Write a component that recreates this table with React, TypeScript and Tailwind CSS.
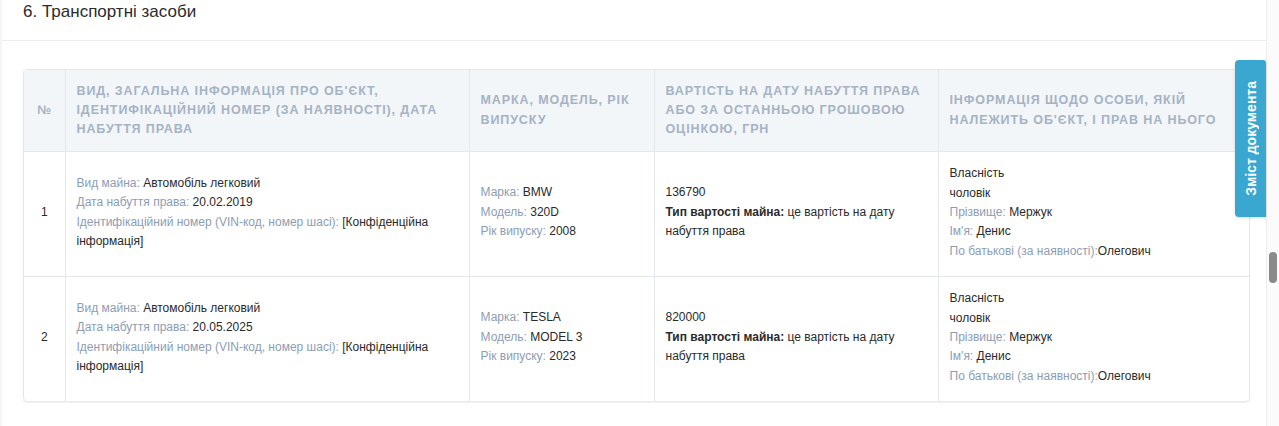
const vehicles = [
  {
    n: "1",
    date: "20.02.2019",
    brand: "BMW",
    model: "320D",
    year: "2008",
    price: "136790",
  },
  {
    n: "2",
    date: "20.05.2025",
    brand: "TESLA",
    model: "MODEL 3",
    year: "2023",
    price: "820000",
  },
];

const heads = [
  "№",
  "Вид, загальна інформація про об'єкт, ідентифікаційний номер (за наявності), дата набуття права",
  "Марка, модель, рік випуску",
  "Вартість на дату набуття права або за останньою грошовою оцінкою, грн",
  "Інформація щодо особи, якій належить об'єкт, і прав на нього",
];

const Label = ({ children }: { children: string }) => <span className="text-[#8c9db3]">{children}</span>;

const App = () => (
  <div className="flex w-[1279px] h-[426px] overflow-hidden bg-white font-['Liberation_Sans',Arial,sans-serif] text-[#2a2a2a]">
    <div className="relative w-[1266px] shrink-0 border-l-[2px] border-[#f4f5f6]">
      <div className="h-[41px] border-b border-[#ebedef] pl-[21px] text-[17px] leading-[24px] text-[#2b2b2b]">
        6. Транспортні засоби
      </div>
      <div className="pl-[21px] pt-[28px]">
        <div className="w-[1227px] overflow-hidden rounded-[4px] border border-[#e4e8ec] shadow-[0_1px_2px_rgba(0,0,0,0.06)]">
          <table className="w-full table-fixed border-collapse text-[12px] leading-[19.4px]">
            <colgroup>
              <col className="w-[41px]" />
              <col className="w-[404px]" />
              <col className="w-[185px]" />
              <col className="w-[284px]" />
              <col />
            </colgroup>
            <thead>
              <tr className="bg-[#f3f6f9]">
                {heads.map((h, i) => (
                  <th
                    key={h}
                    className={`border-b border-[#e4e8ec] py-[11.5px] align-middle text-[12.5px] leading-[19.4px] font-bold uppercase text-[#a5b3c4] ${
                      i === 0 ? "px-0 text-center tracking-normal" : "border-l px-[11px] text-left tracking-[0.9px]"
                    }`}
                  >
                    {h}
                  </th>
                ))}
              </tr>
            </thead>
            <tbody>
              {vehicles.map((v, idx) => (
                <tr key={v.n} className={idx > 0 ? "border-t border-[#e4e8ec]" : ""}>
                  <td className="pb-[4px] text-center align-middle">{v.n}</td>
                  <td className="border-l border-[#e4e8ec] px-[11px] pt-[12px] pb-[15px] align-middle">
                    <div>
                      <Label>Вид майна:</Label> Автомобіль легковий
                    </div>
                    <div>
                      <Label>Дата набуття права:</Label> {v.date}
                    </div>
                    <div>
                      <Label>Ідентифікаційний номер (VIN-код, номер шасі):</Label> [Конфіденційна інформація]
                    </div>
                  </td>
                  <td className="border-l border-[#e4e8ec] px-[11px] pb-[4px] align-middle">
                    <div>
                      <Label>Марка:</Label> {v.brand}
                    </div>
                    <div>
                      <Label>Модель:</Label> {v.model}
                    </div>
                    <div>
                      <Label>Рік випуску:</Label> {v.year}
                    </div>
                  </td>
                  <td className="border-l border-[#e4e8ec] px-[11px] pb-[4px] align-middle">
                    <div>{v.price}</div>
                    <div>
                      <span className="font-bold">Тип вартості майна:</span> це вартість на дату набуття права
                    </div>
                  </td>
                  <td className="border-l border-[#e4e8ec] px-[11px] pt-[12px] pb-[15px] align-middle">
                    <div>Власність</div>
                    <div>чоловік</div>
                    <div>
                      <Label>Прізвище:</Label> Мержук
                    </div>
                    <div>
                      <Label>Ім'я:</Label> Денис
                    </div>
                    <div>
                      <Label>По батькові (за наявності):</Label>Олегович
                    </div>
                  </td>
                </tr>
              ))}
            </tbody>
          </table>
        </div>
      </div>

      <button className="absolute right-0 top-[60px] flex h-[157px] w-[31px] items-center justify-center rounded-l-[4px] rounded-tr-[3px] bg-[#3aa7d1] shadow-[0_1px_3px_rgba(0,0,0,0.15)]">
        <span className="rotate-180 text-[14px] font-bold leading-none text-white [writing-mode:vertical-rl]">Зміст документа</span>
      </button>
    </div>

    <div className="w-[13px] shrink-0 border-l border-[#ededed] bg-[#fbfbfb] pt-[252px]">
      <div className="ml-[2px] h-[31px] w-[8px] rounded-full bg-[#8a8a8a]" />
    </div>
  </div>
);

export default App;
